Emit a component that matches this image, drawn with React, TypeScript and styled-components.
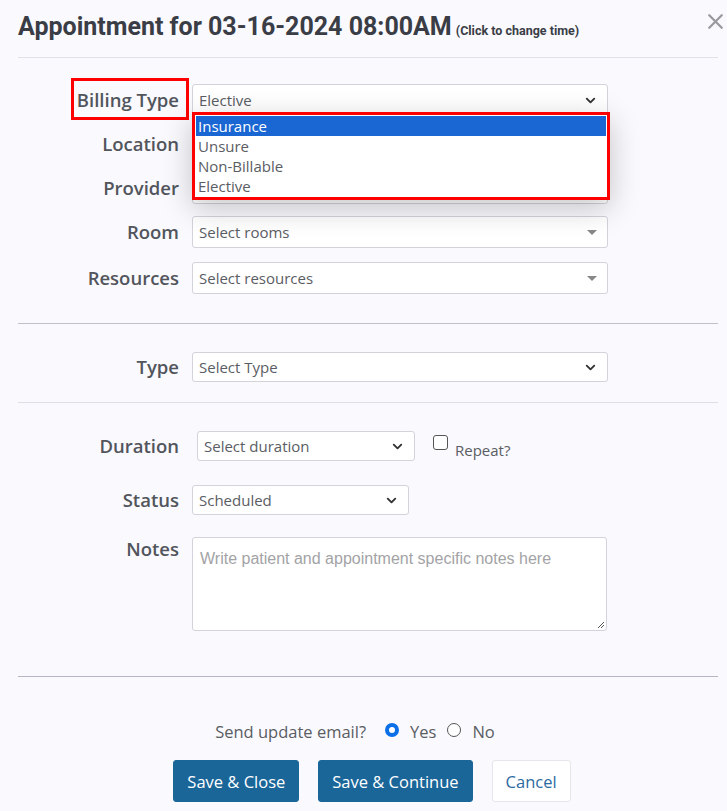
import React from "react";
import styled, {createGlobalStyle} from "styled-components";
import {ChevronDown, X} from "lucide-react";

const GlobalStyle = createGlobalStyle`
  body {
    margin: 0;
    background: #f9f9fe;
    font-family: "Open Sans", "Liberation Sans", sans-serif;
    color: #4b4f56;
  }
`

const billingOptions = ['Insurance', 'Unsure', 'Non-Billable', 'Elective']

const Modal = styled.div`
  width: 700px;
  padding: 0 9px 0 18px;
`

const Header = styled.div`
  display: flex;
  align-items: flex-start;
  justify-content: space-between;
  height: 57px;
  border-bottom: 1px solid #e1e1ea;
`

const Title = styled.h1`
  margin: 12px 0 0;
  font-family: Roboto, "Liberation Sans", sans-serif;
  font-size: 25px;
  font-weight: 700;
  color: #3a3d45;
  line-height: 29px;
`

const TitleHint = styled.span`
  font-size: 12.5px;
  font-weight: 700;
  margin-left: 4px;
`

const Close = styled.div`
  margin: 9px -10px 0 0;
  color: #9a9a9e;
  display: flex;
`

const Section = styled.div<{top: number, bottom: number, line: string}>`
  display: flex;
  flex-direction: column;
  gap: 12px;
  padding: ${p => p.top}px 0 ${p => p.bottom}px;
  border-bottom: 1px solid ${p => p.line};
`

const Row = styled.div<{top?: boolean, space?: number}>`
  display: grid;
  grid-template-columns: 161px 1fr;
  column-gap: 13px;
  margin-top: ${p => p.space || 0}px;
  align-items: ${p => p.top ? 'start' : 'center'};
`

const Label = styled.div`
  position: relative;
  text-align: right;
  font-size: 18.5px;
  font-weight: 600;
  color: #52555c;
  line-height: 24px;
`

const Highlight = styled.div`
  position: absolute;
  right: -10px;
  top: -10px;
  width: 112px;
  height: 36px;
  border: 3px solid #f00;
`

const Field = styled.div`
  position: relative;
  display: flex;
  align-items: center;
  gap: 18px;
`

const SelectBox = styled.div<{width?: number, shift?: number, short?: boolean}>`
  box-sizing: border-box;
  width: ${p => p.width ? p.width + 'px' : '416px'};
  margin-left: ${p => p.shift || 0}px;
  height: ${p => p.short ? 30 : 32}px;
  display: flex;
  align-items: center;
  justify-content: space-between;
  padding: 0 9px 0 6px;
  background: #fff;
  border: 1px solid #d3d3dc;
  border-radius: 3px;
  font-size: 15px;
  color: #5a5d63;
`

const Caret = styled.span`
  width: 0;
  height: 0;
  margin-left: auto;
  margin-right: 1px;
  border-left: 5px solid transparent;
  border-right: 5px solid transparent;
  border-top: 5px solid #888;
`

const Dropdown = styled.div`
  position: absolute;
  left: 0;
  top: 28px;
  z-index: 2;
  box-sizing: border-box;
  width: 418px;
  padding: 1px;
  background: #fff;
  border: 3px solid #f00;
  box-shadow: 0 8px 28px rgba(0, 0, 0, 0.22);
`

const Option = styled.div<{active?: boolean}>`
  height: 20px;
  line-height: 20px;
  padding-left: 2px;
  font-size: 15px;
  color: ${p => p.active ? '#fff' : '#5a5d63'};
  background: ${p => p.active ? '#1a66d2' : 'transparent'};
`

const Check = styled.span`
  display: inline-block;
  width: 13px;
  height: 13px;
  border: 1px solid #555;
  border-radius: 3px;
  background: #fff;
`

const CheckLabel = styled.label`
  display: flex;
  align-items: flex-start;
  gap: 7px;
  font-size: 15px;
  color: #5a5d63;
  margin-top: 2px;
  span:last-child {
    margin-top: 5px;
  }
`

const Notes = styled.div`
  box-sizing: border-box;
  position: relative;
  width: 415px;
  height: 94px;
  padding: 12px 7px;
  background: #fff;
  border: 1px solid #d3d3dc;
  border-radius: 3px;
  font-family: "Liberation Sans", Arial, sans-serif;
  font-size: 16px;
  color: #a3a3a6;
`

const Grip = styled.svg`
  position: absolute;
  right: 1px;
  bottom: 1px;
`

const Footer = styled.div`
  display: flex;
  flex-direction: column;
  align-items: center;
  padding: 43px 0 0 8px;
  gap: 17px;
`

const EmailRow = styled.div`
  display: flex;
  align-items: center;
  font-size: 16.5px;
  color: #5a5d63;
  margin-right: 34px;
`

const Radio = styled.span<{checked?: boolean}>`
  box-sizing: border-box;
  display: inline-block;
  width: 14px;
  height: 14px;
  border-radius: 50%;
  margin: 0 11px 3px 0;
  border: ${p => p.checked ? '4px solid #0b6fe8' : '1px solid #555'};
  background: #fff;
`

const EmailText = styled.span<{gap: number}>`
  margin-right: ${p => p.gap}px;
`

const Buttons = styled.div`
  display: flex;
  gap: 19px;
`

const Button = styled.button<{plain?: boolean}>`
  height: 42px;
  padding: 0 13px;
  border-radius: 3px;
  font-family: "Open Sans", "Liberation Sans", sans-serif;
  font-size: 16.5px;
  cursor: pointer;
  color: ${p => p.plain ? '#2c6a9f' : '#fff'};
  background: ${p => p.plain ? '#fff' : '#1b6699'};
  border: 1px solid ${p => p.plain ? '#e6e6ec' : '#1b6699'};
`

const chevron = <ChevronDown size={15} strokeWidth={3} color="#333" />

export default function App() {
    return (
        <>
            <GlobalStyle />
            <Modal>
                <Header>
                    <Title>
                        Appointment for 03-16-2024 08:00AM
                        <TitleHint>(Click to change time)</TitleHint>
                    </Title>
                    <Close><X size={25} strokeWidth={2.2} /></Close>
                </Header>

                <Section top={26} bottom={29} line="#c0c0cc">
                    <Row>
                        <Label>Billing Type<Highlight /></Label>
                        <Field>
                            <SelectBox>Elective{chevron}</SelectBox>
                            <Dropdown>
                                {billingOptions.map((o, i) => (
                                    <Option key={o} active={i === 0}>{o}</Option>
                                ))}
                            </Dropdown>
                        </Field>
                    </Row>
                    <Row>
                        <Label>Location</Label>
                        <Field><SelectBox><Caret /></SelectBox></Field>
                    </Row>
                    <Row>
                        <Label>Provider</Label>
                        <Field><SelectBox><Caret /></SelectBox></Field>
                    </Row>
                    <Row>
                        <Label>Room</Label>
                        <Field><SelectBox>Select rooms<Caret /></SelectBox></Field>
                    </Row>
                    <Row space={2}>
                        <Label>Resources</Label>
                        <Field><SelectBox>Select resources<Caret /></SelectBox></Field>
                    </Row>
                </Section>

                <Section top={28} bottom={20} line="#dedee6">
                    <Row>
                        <Label>Type</Label>
                        <Field><SelectBox short>Select Type{chevron}</SelectBox></Field>
                    </Row>
                </Section>

                <Section top={28} bottom={45} line="#b4b6c8">
                    <Row>
                        <Label>Duration</Label>
                        <Field>
                            <SelectBox short width={218} shift={5}>Select duration{chevron}</SelectBox>
                            <CheckLabel><Check /><span>Repeat?</span></CheckLabel>
                        </Field>
                    </Row>
                    <Row space={12}>
                        <Label>Status</Label>
                        <Field><SelectBox short width={217}>Scheduled{chevron}</SelectBox></Field>
                    </Row>
                    <Row top space={10}>
                        <Label>Notes</Label>
                        <Field>
                            <Notes>
                                Write patient and appointment specific notes here
                                <Grip width="10" height="10" viewBox="0 0 10 10">
                                    <path d="M9 3 L3 9 M9 6 L6 9" stroke="#555" strokeWidth="1" />
                                </Grip>
                            </Notes>
                        </Field>
                    </Row>
                </Section>

                <Footer>
                    <EmailRow>
                        <EmailText gap={19}>Send update email?</EmailText>
                        <Radio checked />
                        <EmailText gap={11}>Yes</EmailText>
                        <Radio />
                        <EmailText gap={0}>No</EmailText>
                    </EmailRow>
                    <Buttons>
                        <Button>Save &amp; Close</Button>
                        <Button>Save &amp; Continue</Button>
                        <Button plain>Cancel</Button>
                    </Buttons>
                </Footer>
            </Modal>
        </>
    )
}
